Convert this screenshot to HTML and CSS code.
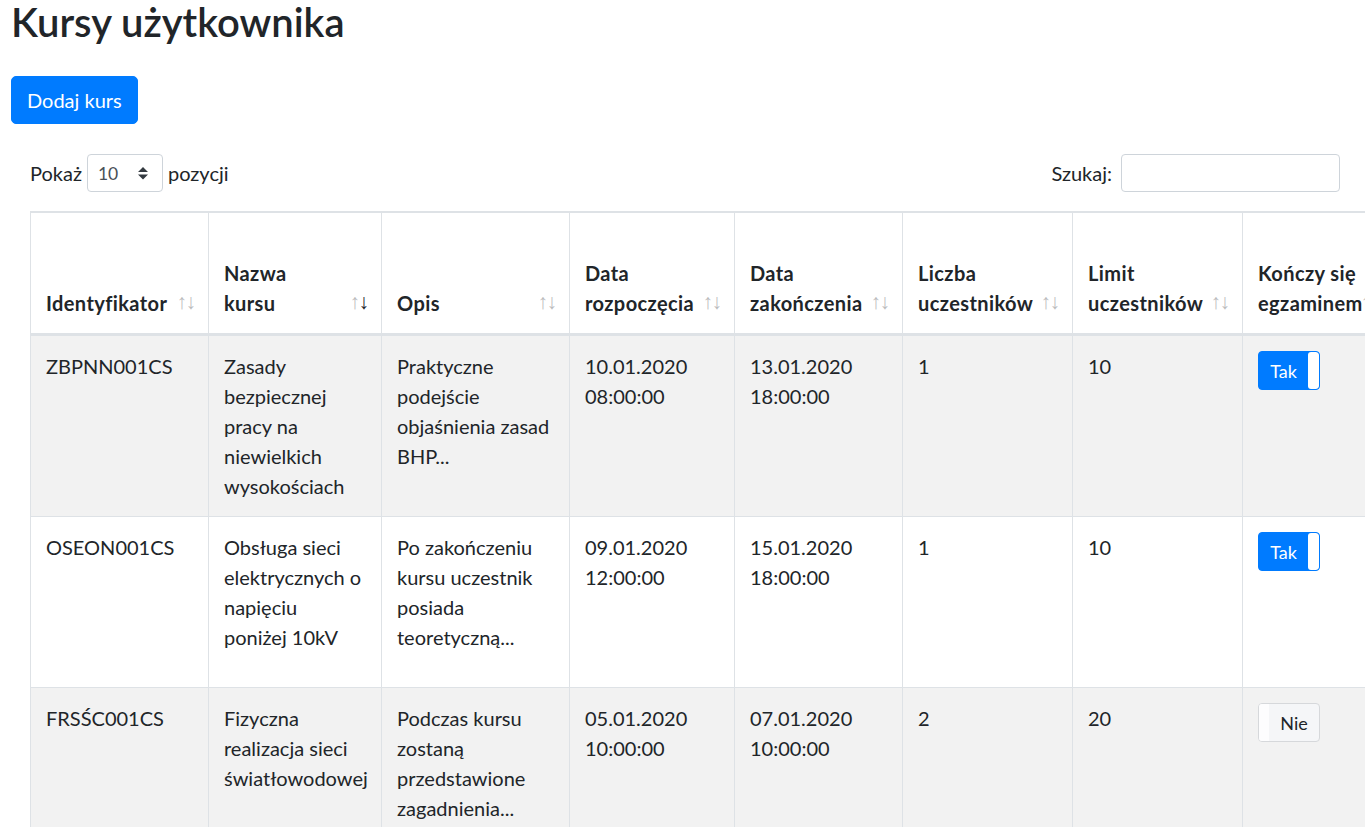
FILE: index.html
```html
<!DOCTYPE html>
<html lang="pl">
<head>
<meta charset="utf-8">
<title>Kursy użytkownika</title>
<link rel="stylesheet" href="styles.css">
</head>
<body>
<main class="page">
  <h1 class="title">Kursy użytkownika</h1>
  <button class="btn-add" type="button">Dodaj kurs</button>

  <section class="dt-wrapper">
    <div class="dt-top">
      <label class="dt-length">
        <span>Pokaż</span>
        <span class="select-wrap">
          <select class="select-sm">
            <option>10</option>
            <option>25</option>
            <option>50</option>
            <option>100</option>
          </select>
          <svg class="select-arrows" viewBox="0 0 4 5" width="10" height="12.5" aria-hidden="true"><path fill="#343a40" d="M2 0L0 2h4zm0 5L0 3h4z"/></svg>
        </span>
        <span>pozycji</span>
      </label>
      <label class="dt-filter">
        <span>Szukaj:</span>
        <input class="input-sm" type="search">
      </label>
    </div>

    <table class="dt-table">
      <colgroup>
        <col class="w-id">
        <col class="w-name">
        <col class="w-desc">
        <col class="w-date">
        <col class="w-date2">
        <col class="w-num">
        <col class="w-num">
        <col class="w-exam">
        <col class="w-hours">
        <col class="w-actions">
      </colgroup>
      <thead>
        <tr>
          <th class="sorting">Identyfikator</th>
          <th class="sorting sorting-desc">Nazwa<br>kursu</th>
          <th class="sorting">Opis</th>
          <th class="sorting">Data<br>rozpoczęcia</th>
          <th class="sorting">Data<br>zakończenia</th>
          <th class="sorting">Liczba<br>uczestników</th>
          <th class="sorting">Limit<br>uczestników</th>
          <th class="sorting">Kończy się<br>egzaminem</th>
          <th class="sorting">Liczba<br>godzin<br>zajęć</th>
          <th>Akcje</th>
        </tr>
      </thead>
      <tbody>
        <tr class="odd">
          <td>ZBPNN001CS</td>
          <td>Zasady<br>bezpiecznej<br>pracy na<br>niewielkich<br>wysokościach</td>
          <td>Praktyczne<br>podejście<br>objaśnienia zasad<br>BHP...</td>
          <td>10.01.2020<br>08:00:00</td>
          <td>13.01.2020<br>18:00:00</td>
          <td>1</td>
          <td>10</td>
          <td><div class="toggle toggle-on"><span class="toggle-label">Tak</span><span class="toggle-handle"></span></div></td>
          <td>16</td>
          <td><div class="actions"><button class="btn-sm">Edytuj</button><button class="btn-sm">Uczestnicy</button><button class="btn-sm">Usuń</button></div></td>
        </tr>
        <tr class="even">
          <td>OSEON001CS</td>
          <td>Obsługa sieci<br>elektrycznych o<br>napięciu<br>poniżej 10kV</td>
          <td>Po zakończeniu<br>kursu uczestnik<br>posiada<br>teoretyczną...</td>
          <td>09.01.2020<br>12:00:00</td>
          <td>15.01.2020<br>18:00:00</td>
          <td>1</td>
          <td>10</td>
          <td><div class="toggle toggle-on"><span class="toggle-label">Tak</span><span class="toggle-handle"></span></div></td>
          <td>40</td>
          <td><div class="actions"><button class="btn-sm">Edytuj</button><button class="btn-sm">Uczestnicy</button><button class="btn-sm">Usuń</button></div></td>
        </tr>
        <tr class="odd">
          <td>FRSŚC001CS</td>
          <td>Fizyczna<br>realizacja sieci<br>światłowodowej</td>
          <td>Podczas kursu<br>zostaną<br>przedstawione<br>zagadnienia...</td>
          <td>05.01.2020<br>10:00:00</td>
          <td>07.01.2020<br>10:00:00</td>
          <td>2</td>
          <td>20</td>
          <td><div class="toggle toggle-off"><span class="toggle-handle"></span><span class="toggle-label">Nie</span></div></td>
          <td>24</td>
          <td><div class="actions"><button class="btn-sm">Edytuj</button><button class="btn-sm">Uczestnicy</button><button class="btn-sm">Usuń</button></div></td>
        </tr>
      </tbody>
    </table>
  </section>
</main>
</body>
</html>
```

FILE: styles.css
```css
html, body {
  margin: 0;
  padding: 0;
  overflow: hidden;
  background: #fff;
}

body {
  font-family: Lato, "Noto Sans", sans-serif;
  font-size: 20px;
  line-height: 1.5;
  color: #212529;
  font-variant-ligatures: none;
}

.page {
  padding: 0 0 0 11px;
}

.title {
  margin: 0 0 32px;
  font-size: 40px;
  line-height: 44px;
  font-weight: 600;
  color: #212529;
}

.btn-add {
  display: block;
  margin: 0 0 30px;
  padding: 8px 15px;
  font-family: inherit;
  font-size: 20px;
  line-height: 30px;
  color: #fff;
  background: #007bff;
  border: 1px solid #007bff;
  border-radius: 5px;
  font-variant-ligatures: none;
}

.dt-wrapper {
  padding: 0 25px 0 19px;
}

.dt-top {
  display: flex;
  justify-content: space-between;
  align-items: center;
  height: 38px;
  margin-bottom: 19px;
}

.dt-length,
.dt-filter {
  display: flex;
  align-items: center;
}

.dt-length {
  gap: 5px;
}

.dt-filter {
  gap: 9px;
}

.select-wrap {
  position: relative;
  display: block;
}

.select-sm {
  display: block;
  width: 76px;
  height: 38px;
  padding: 0 30px 0 10px;
  font-family: inherit;
  font-size: 17.5px;
  color: #495057;
  background: #fff;
  border: 1px solid #ced4da;
  border-radius: 4px;
  appearance: none;
  -webkit-appearance: none;
}

.select-arrows {
  position: absolute;
  right: 15px;
  top: 13px;
  pointer-events: none;
}

.input-sm {
  box-sizing: border-box;
  width: 219px;
  height: 38px;
  padding: 5px 10px;
  font-family: inherit;
  font-size: 17.5px;
  border: 1px solid #ced4da;
  border-radius: 4px;
  background: #fff;
}

.dt-table {
  table-layout: fixed;
  width: 1542px;
  border-collapse: separate;
  border-spacing: 0;
  border-left: 1px solid #dee2e6;
  border-top: 2px solid #dee2e6;
}

.w-id { width: 178px; }
.w-name { width: 173px; }
.w-desc { width: 188px; }
.w-date { width: 165px; }
.w-date2 { width: 168px; }
.w-num { width: 170px; }
.w-exam { width: 150px; }
.w-hours { width: 130px; }
.w-actions { width: 150px; }

.dt-table th,
.dt-table td {
  padding: 15px;
  border-right: 1px solid #dee2e6;
  text-align: left;
}

.dt-table th {
  position: relative;
  vertical-align: bottom;
  font-weight: 700;
  letter-spacing: 0.4px;
  white-space: nowrap;
  border-bottom: 3px solid #dee2e6;
}

.dt-table th.sorting {
  padding-right: 37px;
}

.dt-table th.sorting::before,
.dt-table th.sorting::after {
  position: absolute;
  bottom: 18px;
  font-family: "Liberation Sans", Arial, sans-serif;
  font-size: 21px;
  font-weight: 400;
  letter-spacing: 0;
  line-height: 27px;
  opacity: 0.3;
}

.dt-table th.sorting::before {
  content: "\2191";
  right: 21px;
}

.dt-table th.sorting::after {
  content: "\2193";
  right: 12px;
}

.dt-table th.sorting-desc::after {
  opacity: 1;
}

.dt-table td {
  vertical-align: top;
  border-bottom: 1px solid #dee2e6;
}

.dt-table tr.odd td {
  background: #f2f2f2;
}

.toggle {
  box-sizing: border-box;
  display: flex;
  width: 62px;
  height: 39px;
  border-radius: 4px;
  overflow: hidden;
  font-size: 18px;
  line-height: 1;
}

.toggle-label {
  flex: 1;
  display: flex;
  align-items: center;
  justify-content: center;
}

.toggle-handle {
  width: 11px;
  background: #fff;
}

.toggle-on {
  background: #007bff;
  border: 1px solid #007bff;
  color: #fff;
}

.toggle-on .toggle-handle {
  border-radius: 3px;
}

.toggle-off {
  background: #f5f6f8;
  border: 1px solid #d6d8db;
  color: #212529;
}

.toggle-off .toggle-handle {
  width: 10px;
  background: #fdfdfe;
}

.actions {
  display: flex;
  flex-direction: column;
  gap: 13px;
  height: 140px;
}

.btn-sm {
  height: 38px;
  padding: 0 10px;
  font-family: inherit;
  font-size: 17.5px;
  color: #fff;
  background: #6c757d;
  border: 1px solid #6c757d;
  border-radius: 4px;
}
```
